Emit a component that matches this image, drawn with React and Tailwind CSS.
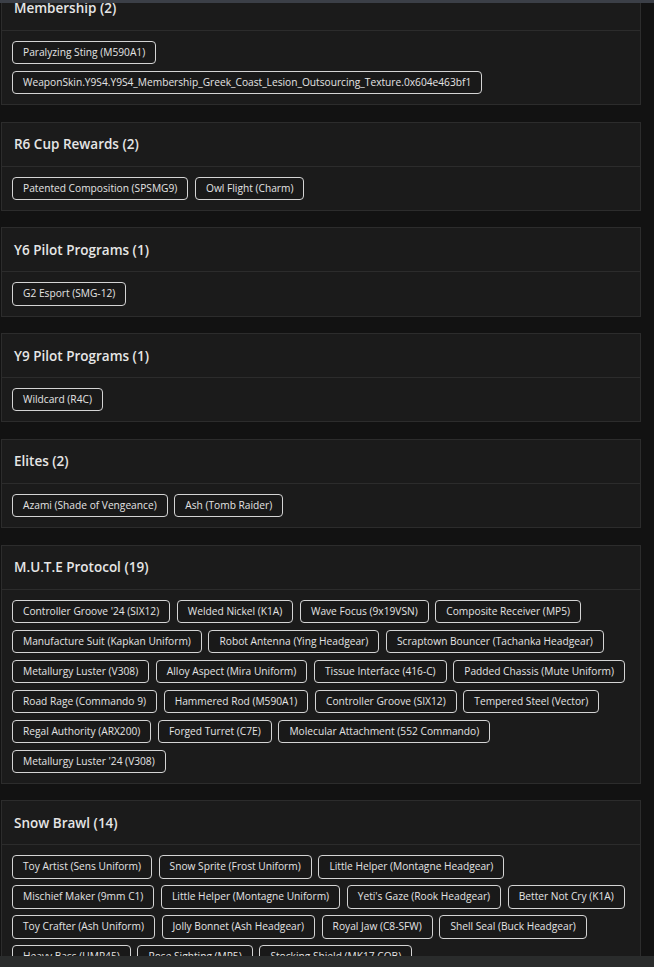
import React from "react";

const categorias = [
  {
    nombre: "Membership",
    items: [
      "Paralyzing Sting (M590A1)",
      "WeaponSkin.Y9S4.Y9S4_Membership_Greek_Coast_Lesion_Outsourcing_Texture.0x604e463bf1",
    ],
  },
  {
    nombre: "R6 Cup Rewards",
    items: ["Patented Composition (SPSMG9)", "Owl Flight (Charm)"],
  },
  { nombre: "Y6 Pilot Programs", items: ["G2 Esport (SMG-12)"] },
  { nombre: "Y9 Pilot Programs", items: ["Wildcard (R4C)"] },
  {
    nombre: "Elites",
    items: ["Azami (Shade of Vengeance)", "Ash (Tomb Raider)"],
  },
  {
    nombre: "M.U.T.E Protocol",
    items: [
      "Controller Groove '24 (SIX12)",
      "Welded Nickel (K1A)",
      "Wave Focus (9x19VSN)",
      "Composite Receiver (MP5)",
      "Manufacture Suit (Kapkan Uniform)",
      "Robot Antenna (Ying Headgear)",
      "Scraptown Bouncer (Tachanka Headgear)",
      "Metallurgy Luster (V308)",
      "Alloy Aspect (Mira Uniform)",
      "Tissue Interface (416-C)",
      "Padded Chassis (Mute Uniform)",
      "Road Rage (Commando 9)",
      "Hammered Rod (M590A1)",
      "Controller Groove (SIX12)",
      "Tempered Steel (Vector)",
      "Regal Authority (ARX200)",
      "Forged Turret (C7E)",
      "Molecular Attachment (552 Commando)",
      "Metallurgy Luster '24 (V308)",
    ],
  },
  {
    nombre: "Snow Brawl",
    items: [
      "Toy Artist (Sens Uniform)",
      "Snow Sprite (Frost Uniform)",
      "Little Helper (Montagne Headgear)",
      "Mischief Maker (9mm C1)",
      "Little Helper (Montagne Uniform)",
      "Yeti's Gaze (Rook Headgear)",
      "Better Not Cry (K1A)",
      "Toy Crafter (Ash Uniform)",
      "Jolly Bonnet (Ash Headgear)",
      "Royal Jaw (C8-SFW)",
      "Shell Seal (Buck Headgear)",
      "Heavy Bass (UMP45)",
      "Rose Sighting (MP5)",
      "Stocking Shield (MK17 CQB)",
    ],
  },
];

const Categoria = ({ nombre, items }) => (
  <div className="border border-[#2c2c2c] bg-[#1b1b1b]">
    {/* Cabecera */}
    <div className="h-[44px] flex items-center px-[12px] border-b border-[#2c2c2c]">
      <h3 className="text-[13.5px] font-semibold text-[#e6e6e6]">
        {nombre} ({items.length})
      </h3>
    </div>
    {/* Items */}
    <div className="flex flex-wrap gap-[6.67px] p-[10px]">
      {items.map((item) => (
        <span
          key={item}
          className="h-[23.33px] flex items-center px-[10px] border border-[#d4d4d4] rounded-[4px] bg-[#191919] text-[10.2px] text-[#e4e4e4] whitespace-nowrap"
        >
          {item}
        </span>
      ))}
    </div>
  </div>
);

const App = () => {
  return (
    <div
      className="relative h-screen overflow-hidden bg-[#121212]"
      style={{ fontFamily: '"Open Sans", "Liberation Sans", sans-serif' }}
    >
      <div className="w-[641px] pl-[1px] -mt-[14px] flex flex-col gap-[16.4px]">
        {categorias.map((cat) => (
          <Categoria key={cat.nombre} nombre={cat.nombre} items={cat.items} />
        ))}
      </div>

      {/* barra superior */}
      <div className="absolute top-0 left-0 right-0 h-[3px] bg-[#3b3f47]" />
      {/* barra inferior */}
      <div className="absolute bottom-0 left-0 right-0 h-[11px] bg-[#2a2c2c]" />
    </div>
  );
};

export default App;
